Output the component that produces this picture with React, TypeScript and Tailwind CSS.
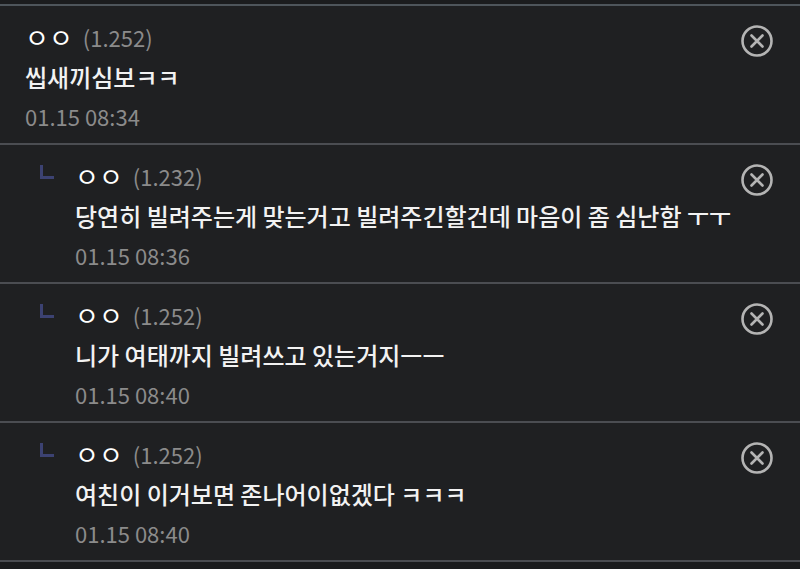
import React from 'react'

type Comment = {
  id: number
  name: string
  ip: string
  text: string
  date: string
  reply?: boolean
}

const comments: Comment[] = [
  { id: 1, name: 'ㅇㅇ', ip: '(1.252)', text: '씹새끼심보ㅋㅋ', date: '01.15 08:34' },
  {
    id: 2,
    name: 'ㅇㅇ',
    ip: '(1.232)',
    text: '당연히 빌려주는게 맞는거고 빌려주긴할건데 마음이 좀 심난함 ㅜㅜ',
    date: '01.15 08:36',
    reply: true,
  },
  { id: 3, name: 'ㅇㅇ', ip: '(1.252)', text: '니가 여태까지 빌려쓰고 있는거지ㅡㅡ', date: '01.15 08:40', reply: true },
  { id: 4, name: 'ㅇㅇ', ip: '(1.252)', text: '여친이 이거보면 존나어이없겠다 ㅋㅋㅋ', date: '01.15 08:40', reply: true },
]

function CloseIcon() {
  return (
    <svg width="34" height="34" viewBox="0 0 34 34" fill="none" stroke="#b4b4b4" strokeWidth="2.6" strokeLinecap="round">
      <circle cx="17" cy="17" r="14.5" />
      <path d="M11.5 11.5 L22.5 22.5 M22.5 11.5 L11.5 22.5" />
    </svg>
  )
}

function CommentRow({ c }: { c: Comment }) {
  return (
    <div className="h-[137px] bg-[#1f2022] flex">
      {c.reply && (
        <div className="w-[75px] shrink-0 pl-[40px] pt-[20px]">
          <div className="w-[14px] h-[14px] border-l-[3px] border-b-[3px] border-[#3c4272]" />
        </div>
      )}
      <div className={`flex-1 min-w-0 flex flex-col ${c.reply ? '' : 'pl-[25px]'} pt-[16px]`}>
        <div className="flex items-center gap-[10px] h-[30px]">
          <span className="text-white text-[26px] leading-[30px]">{c.name}</span>
          <span className="text-[#8b8b8b] text-[22px] leading-[30px]">{c.ip}</span>
        </div>
        <div className="text-[#f2f2f2] text-[24px] font-medium mt-[10px] h-[30px] leading-[30px] whitespace-nowrap">{c.text}</div>
        <div className="text-[#8b8b8b] text-[22px] mt-[9px] h-[30px] leading-[30px]">{c.date}</div>
      </div>
      <div className="w-[77px] shrink-0 pt-[18px] pl-[17px]">
        <CloseIcon />
      </div>
    </div>
  )
}

export default function App() {
  return (
    <div
      className="w-[800px] h-[569px] bg-[#1b1c1e] pt-[4px] overflow-hidden"
      style={{ fontFamily: '"Noto Sans CJK KR", "Noto Sans", sans-serif' }}
    >
      <div className="h-[2px] bg-[#4e555b]" />
      {comments.map((c) => (
        <div key={c.id}>
          <CommentRow c={c} />
          <div className="h-[2px] bg-[#4b4d52]" />
        </div>
      ))}
    </div>
  )
}
